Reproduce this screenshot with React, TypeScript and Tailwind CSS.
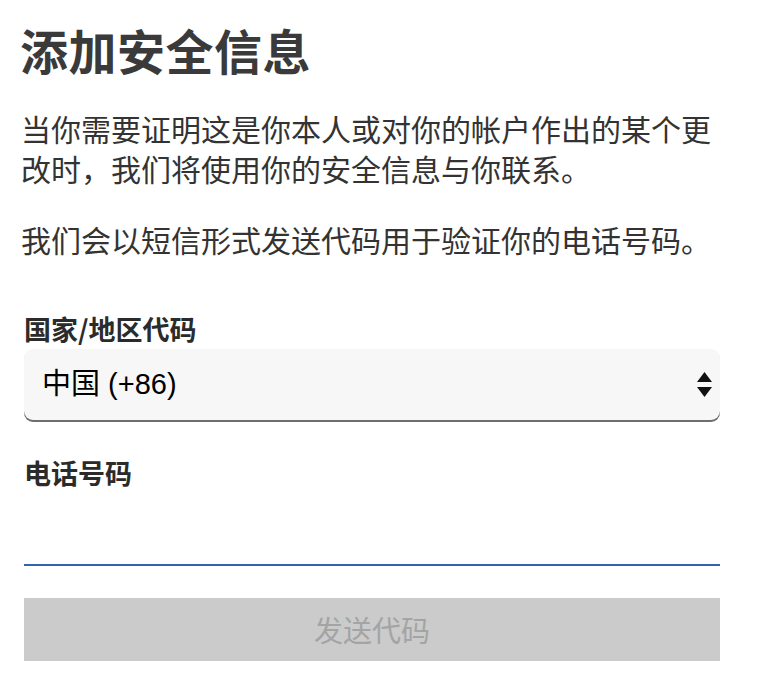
import React from "react";

export default function App() {
  const cjk = { fontFamily: '"Noto Sans CJK SC", "Noto Sans", sans-serif' };
  const mixed = { fontFamily: '"Liberation Sans", "Noto Sans CJK SC", sans-serif' };
  return (
    <div className="min-h-[682px] w-[778px] bg-white" style={cjk}>
      <div className="w-[720px] pl-[20px] pt-[25px]">
        <h1 className="text-[48px] leading-[48px] font-bold text-[#3a3a3a] tracking-[0.5px]">
          添加安全信息
        </h1>
        <p className="mt-[35px] text-[30px] leading-[40px] text-[#333333] pl-[1px]">
          当你需要证明这是你本人或对你的帐户作出的某个更改时，我们将使用你的安全信息与你联系。
        </p>
        <p className="mt-[31px] text-[30px] leading-[40px] text-[#333333] pl-[1px]">
          我们会以短信形式发送代码用于验证你的电话号码。
        </p>
        <div className="pl-[4px]">
          <label className="mt-[55px] block text-[27px] leading-[30px] font-bold text-[#2b2b2b]">
            国家/地区代码
          </label>
          <div className="mt-[5px] flex h-[71px] w-[696px] items-center justify-between rounded-[9px] bg-[#f7f7f7] pl-[18px] pr-[8px] shadow-[0_2px_0_0_#6e6e6e]">
            <span className="text-[29px] text-black" style={mixed}>
              中国 (+86)
            </span>
            <svg width="15" height="26" viewBox="0 0 15 26">
              <polygon points="7.5,0 15,10 0,10" fill="#111" />
              <polygon points="0,15 15,15 7.5,25" fill="#111" />
            </svg>
          </div>
          <label className="mt-[38px] block text-[27px] leading-[30px] font-bold text-[#2b2b2b]">
            电话号码
          </label>
          <input
            type="tel"
            className="block h-[78px] w-[696px] border-b-2 border-[#2f66a8] bg-transparent text-[27px] outline-none"
          />
          <button className="mt-[32px] flex h-[63px] w-[696px] items-center justify-center bg-[#cbcbcb] text-[29px] text-[#a4a4a4]">
            发送代码
          </button>
        </div>
      </div>
    </div>
  );
}
